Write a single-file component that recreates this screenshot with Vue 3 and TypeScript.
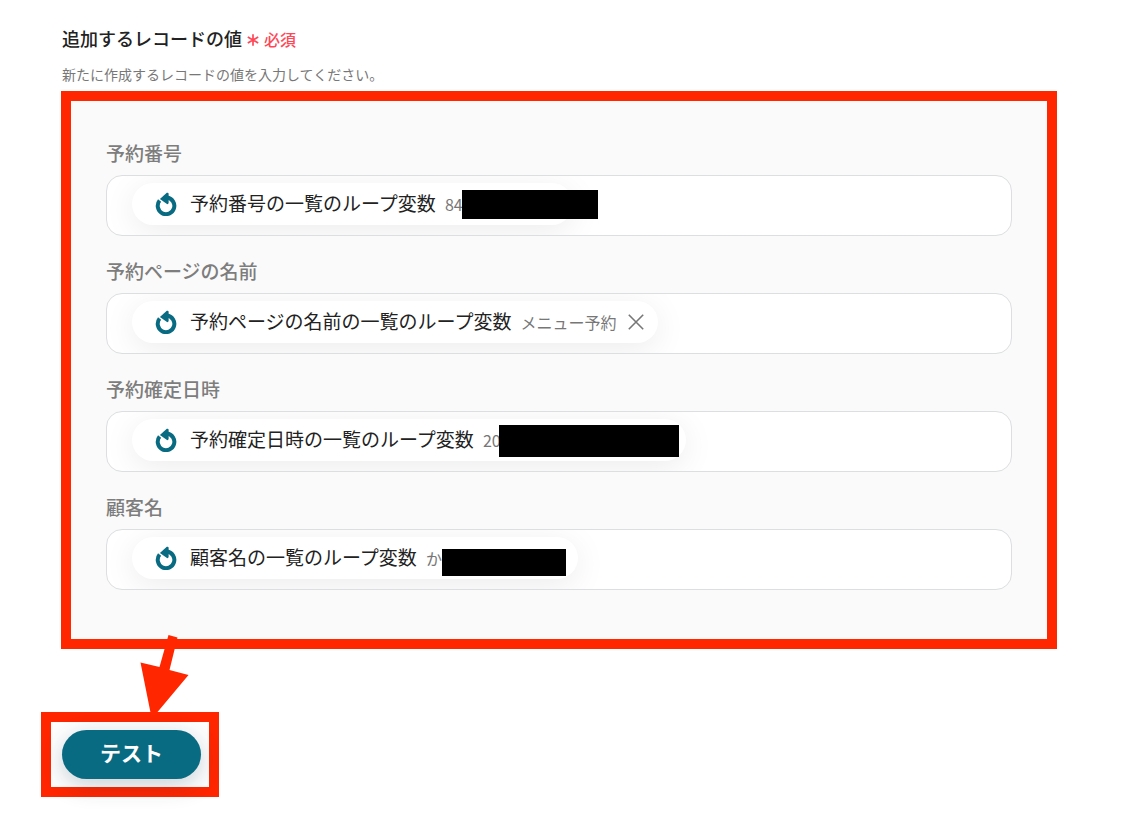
<script setup lang="ts">
interface Field {
  id: string
  label: string
  variable: string
  sample: string
  masked: boolean
}

const fields: Field[] = [
  { id: 'number', label: '予約番号', variable: '予約番号の一覧のループ変数', sample: '84', masked: true },
  { id: 'page', label: '予約ページの名前', variable: '予約ページの名前の一覧のループ変数', sample: 'メニュー予約', masked: false },
  { id: 'date', label: '予約確定日時', variable: '予約確定日時の一覧のループ変数', sample: '20', masked: true },
  { id: 'customer', label: '顧客名', variable: '顧客名の一覧のループ変数', sample: 'か', masked: true },
]
</script>

<template>
  <main class="page">
    <header>
      <h1 class="title">
        追加するレコードの値
        <span class="required">
          <svg class="asterisk" viewBox="0 0 12 12" aria-hidden="true">
            <path d="M6 0.3V11.7M0.8 3L11.2 9M11.2 3L0.8 9" />
          </svg>
          必須
        </span>
      </h1>
      <p class="help">新たに作成するレコードの値を入力してください。</p>
    </header>

    <section class="panel">
      <div v-for="field in fields" :key="field.id" class="field">
        <label class="label" :for="field.id">{{ field.label }}</label>
        <div class="box">
          <div class="chip" :class="`chip-${field.id}`">
            <svg class="loop" viewBox="0 0 24 24" aria-hidden="true">
              <path class="ring" d="M5.6 8.6A8.3 8.3 0 1 0 13 5.6" />
              <path class="head" d="M5.9 7L12.8 0.8Q14.6 0.2 14.6 2V11Q14.2 12.6 13 12Z" />
            </svg>
            <span class="variable">{{ field.variable }}</span>
            <span class="sample">{{ field.sample }}</span>
            <span v-if="field.masked" class="mask"></span>
            <button v-else class="remove" type="button" aria-label="削除">
              <svg viewBox="0 0 16 16" aria-hidden="true">
                <path d="M0.8 0.8L15.2 15.2M15.2 0.8L0.8 15.2" />
              </svg>
            </button>
          </div>
          <input :id="field.id" class="entry" type="text" />
        </div>
      </div>
    </section>

    <div class="action">
      <svg class="arrow" viewBox="0 0 50 84" aria-hidden="true">
        <path d="M28.5 0L37.5 2.5L29.5 35L48.5 40L15 80L11 80L0.5 27.5L19.5 32Z" />
      </svg>
      <button class="test" type="button">テスト</button>
    </div>
  </main>
</template>

<style>
body {
  margin: 0;
  background: #fff;
}
</style>

<style scoped>
.page {
  box-sizing: border-box;
  padding: 24px 78px 22px 61px;
  font-family: "Noto Sans CJK JP", sans-serif;
  color: #222;
}

.title {
  display: flex;
  align-items: center;
  gap: 5px;
  margin: 0 0 12px 1px;
  font-size: 18px;
  line-height: 28px;
  font-weight: 500;
}

.required {
  display: flex;
  align-items: center;
  gap: 5px;
  padding-top: 2px;
  line-height: 26px;
  font-size: 16px;
  color: #ff4757;
}

.asterisk {
  width: 12px;
  height: 12px;
  margin-top: 2px;
  fill: none;
  stroke: #ff4757;
  stroke-width: 1.7;
}

.help {
  margin: 0 0 7px 1px;
  font-size: 14px;
  line-height: 20px;
  color: #777;
}

.panel {
  display: flex;
  flex-direction: column;
  gap: 22px;
  padding: 38px 35px 49px;
  border: 10px solid #ff2600;
  background: #fafafa;
}

.field {
  display: flex;
  flex-direction: column;
  gap: 8px;
}

.field + .field {
  margin-top: -1px;
}

.label {
  font-size: 19px;
  line-height: 28px;
  font-weight: 500;
  color: #7d7d7d;
}

.box {
  display: flex;
  align-items: flex-start;
  box-sizing: border-box;
  height: 61px;
  padding: 7px 24px 0 25px;
  overflow: hidden;
  border: 1px solid #dcdee0;
  border-radius: 16px;
  background: #fff;
}

.chip {
  position: relative;
  display: flex;
  align-items: center;
  flex: none;
  box-sizing: border-box;
  height: 42px;
  padding-left: 22px;
  border-radius: 21px;
  background: #fff;
  box-shadow: 0 6px 32px rgba(0, 0, 0, 0.08);
}

.chip-number { width: 441px; }
.chip-page { width: 526px; }
.chip-date { width: 554px; }
.chip-customer { width: 446px; }

.loop {
  width: 24px;
  height: 24px;
  margin-right: 12px;
}

.ring {
  fill: none;
  stroke: #086b82;
  stroke-width: 4;
}

.head {
  fill: #086b82;
}

.variable {
  margin-right: 9px;
  font-size: 19px;
  line-height: 40px;
  height: 42px;
  color: #222;
}

.sample {
  font-size: 16px;
  color: #777;
}

.mask {
  position: absolute;
  background: #000;
}

.chip-number .mask {
  top: 7px;
  left: 330px;
  width: 136px;
  height: 29px;
}

.chip-date .mask {
  top: 6px;
  left: 367px;
  width: 180px;
  height: 32px;
}

.chip-customer .mask {
  top: 12px;
  left: 310px;
  width: 124px;
  height: 27px;
}

.remove {
  display: flex;
  margin: 0 0 0 auto;
  padding: 0 14px 0 0;
  border: 0;
  background: none;
}

.remove svg {
  width: 16px;
  height: 16px;
  fill: none;
  stroke: #777;
  stroke-width: 1.6;
}

.entry {
  flex: 1;
  min-width: 0;
  height: 42px;
  padding: 0;
  border: 0;
  outline: 0;
  background: transparent;
  font: inherit;
}

.action {
  position: relative;
  width: fit-content;
  margin: 63px 0 0 -20px;
  padding: 8px 8px 8px 11px;
  border: 10px solid #ff2600;
}

.arrow {
  position: absolute;
  top: -87px;
  left: 89px;
  width: 50px;
  height: 84px;
  fill: #ff2600;
}

.test {
  display: block;
  width: 139px;
  height: 49px;
  padding: 0 0 5px;
  border: 0;
  border-radius: 25px;
  background: #086b82;
  box-shadow: 0 6px 24px rgba(20, 50, 70, 0.24);
  color: #fff;
  font-family: inherit;
  font-size: 21px;
  font-weight: 700;
}
</style>
